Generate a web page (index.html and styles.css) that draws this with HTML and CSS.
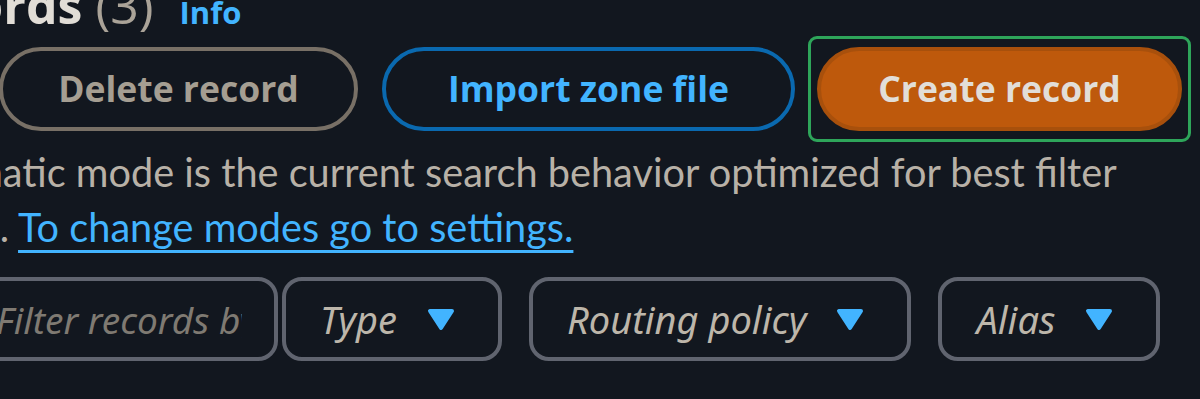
FILE: index.html
```html
<!DOCTYPE html>
<html lang="en">
<head>
<meta charset="utf-8">
<title>Records</title>
<link rel="stylesheet" href="styles.css">
</head>
<body>
<div class="viewport">
  <div class="page">
    <div class="header">
      <h2 class="title">Records <span class="counter">(3)</span></h2>
      <a class="info" href="#">Info</a>
    </div>
    <div class="actions">
      <button class="btn btn-normal btn-disabled btn-delete" disabled>Delete record</button>
      <button class="btn btn-normal btn-import">Import zone file</button>
      <span class="focus-ring"><button class="btn btn-primary btn-create">Create record</button></span>
    </div>
    <p class="desc"><span class="desc-line">Automatic mode is the current search behavior optimized for best filter</span> <span class="desc-line">results.</span> <a class="link" href="#">To change modes go to settings.</a></p>
    <div class="filters">
      <div class="filter-input"><span class="placeholder">Filter records by</span></div>
      <div class="select"><span class="select-label">Type</span><svg class="caret" viewBox="0 0 28 23" width="28" height="23"><path d="M3 3 H25 L14 20 Z"/></svg></div>
      <div class="select"><span class="select-label">Routing policy</span><svg class="caret" viewBox="0 0 28 23" width="28" height="23"><path d="M3 3 H25 L14 20 Z"/></svg></div>
      <div class="select"><span class="select-label">Alias</span><svg class="caret" viewBox="0 0 28 23" width="28" height="23"><path d="M3 3 H25 L14 20 Z"/></svg></div>
    </div>
  </div>
</div>
</body>
</html>
```
FILE: styles.css
```css
html, body {
  margin: 0;
  padding: 0;
  background: #12171f;
}

.viewport {
  width: 1200px;
  height: 399px;
  overflow: hidden;
  background: #12171f;
}

.page {
  width: 1200px;
}

/* Header */
.header {
  display: flex;
  align-items: baseline;
  margin: -23px 0 0 -116px;
  height: 56px;
}

.title {
  margin: 0;
  font: 700 50px/56px "Open Sans", sans-serif;
  color: #e1ddd6;
  white-space: nowrap;
}

.counter {
  font-weight: 500;
  color: #aaa398;
}

.info {
  margin-left: 26px;
  font: 700 31px/56px "Open Sans", sans-serif;
  color: #42b4ff;
  text-decoration: none;
}

/* Actions */
.actions {
  display: flex;
  align-items: center;
  height: 84px;
  margin-top: 14px;
}

.btn {
  box-sizing: border-box;
  height: 84px;
  border: 4px solid transparent;
  border-radius: 42px;
  padding: 0;
  display: flex;
  align-items: center;
  justify-content: center;
  font: 700 35.5px/1 "Open Sans", sans-serif;
  white-space: nowrap;
  background: transparent;
  cursor: pointer;
}

.btn-normal {
  border-color: #0a69af;
  color: #42b4ff;
}

.btn-disabled {
  border-color: #787066;
  color: #a59e92;
  cursor: default;
}

.btn-delete {
  width: 359px;
  margin-left: -1px;
}

.btn-import {
  width: 413px;
  margin-left: 24px;
}

.btn-create {
  width: 365px;
}

.btn-primary {
  background: #be590c;
  border-color: #a8500c;
  color: #e2ded8;
}

.focus-ring {
  display: flex;
  margin: -11px 0 -11px 13px;
  padding: 8px 6px;
  border: 3px solid #2ea55a;
  border-radius: 9px;
}

/* Description */
.desc {
  width: 1280px;
  margin: 13px 0 0 -115px;
  font: 400 39.7px/55px "Lato", sans-serif;
  color: #b8b1a7;
}

.link {
  color: #42b4ff;
  text-decoration: underline;
  text-decoration-thickness: 3px;
  text-underline-offset: 8px;
}

/* Filters */
.filters {
  display: flex;
  height: 84px;
  margin-top: 23px;
}

.filter-input {
  box-sizing: border-box;
  width: 338px;
  margin-left: -60px;
  margin-right: 4px;
  padding: 0 32px 0 52px;
  border: 4px solid #60646f;
  border-radius: 20px;
  display: flex;
  align-items: center;
}

.placeholder {
  flex: 1;
  min-width: 0;
  overflow: hidden;
  white-space: nowrap;
  font: italic 400 37px/1 "Noto Sans", sans-serif;
  color: #7f7a72;
}

.select {
  box-sizing: border-box;
  display: flex;
  align-items: center;
  gap: 30px;
  padding: 0 43px 0 34px;
  border: 4px solid #60646f;
  border-radius: 20px;
  font: italic 400 38px/1 "Noto Sans", sans-serif;
  color: #bdb6aa;
  white-space: nowrap;
}

.select + .select {
  margin-left: 27px;
}

.caret {
  display: block;
  flex: none;
}

.caret path {
  fill: #42b4ff;
  stroke: #42b4ff;
  stroke-width: 4;
  stroke-linejoin: round;
}
```
